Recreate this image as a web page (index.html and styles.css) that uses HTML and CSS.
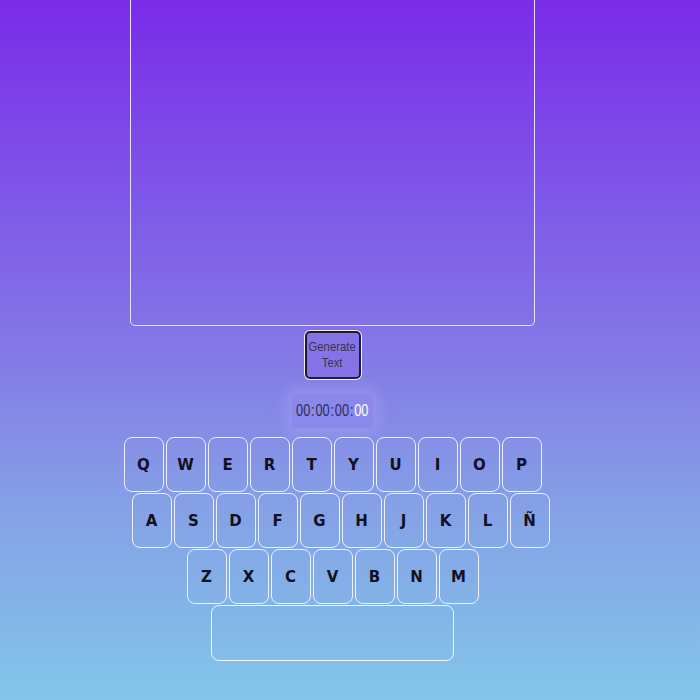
FILE: index.html
```html
<!DOCTYPE html>
<html>
<head>
<meta charset="utf-8">
<link rel="stylesheet" href="styles.css">
</head>
<body>
<main class="app">
  <div class="editor"></div>
  <button class="gen"><span class="narrow">Generate<br>Text</span></button>
  <div class="timer"><span class="narrow time"><span>00</span><span class="sep">:</span><span>00</span><span class="sep">:</span><span>00</span><span class="sep">:</span><span class="ms">00</span></span></div>
  <div class="keyboard">
    <div class="row">
      <div class="key">Q</div><div class="key">W</div><div class="key">E</div><div class="key">R</div><div class="key">T</div><div class="key">Y</div><div class="key">U</div><div class="key">I</div><div class="key">O</div><div class="key">P</div>
    </div>
    <div class="row row2">
      <div class="key">A</div><div class="key">S</div><div class="key">D</div><div class="key">F</div><div class="key">G</div><div class="key">H</div><div class="key">J</div><div class="key">K</div><div class="key">L</div><div class="key">Ñ</div>
    </div>
    <div class="row">
      <div class="key">Z</div><div class="key">X</div><div class="key">C</div><div class="key">V</div><div class="key">B</div><div class="key">N</div><div class="key">M</div>
    </div>
    <div class="row">
      <div class="space"></div>
    </div>
  </div>
</main>
</body>
</html>
```
FILE: styles.css
```css
html, body {
  margin: 0;
  height: 700px;
  overflow: hidden;
}
body {
  background: linear-gradient(to bottom, #7a2be8 0%, #7f5ae8 30%, #8478e6 50%, #85a0e6 72%, #82c6ea 100%);
  font-family: "Liberation Sans", Arial, sans-serif;
}
.app {
  width: 665px;
  display: flex;
  flex-direction: column;
  align-items: center;
}
.editor {
  width: 405px;
  height: 331px;
  margin-top: -5px;
  border: 1px solid #e8e0ff;
  border-radius: 5px;
  box-sizing: border-box;
}
.gen {
  margin-top: 5px;
  width: 56px;
  height: 48px;
  padding: 0;
  background: #8574e6;
  border: 2px solid #1e1a33;
  border-radius: 5px;
  box-shadow: 0 0 0 1px #f2eeff;
  color: #3a3550;
  font-family: "Liberation Sans", Arial, sans-serif;
  font-size: 13px;
  line-height: 16px;
  display: flex;
  align-items: center;
  justify-content: center;
  overflow: visible;
}
.narrow {
  display: inline-block;
  white-space: nowrap;
  transform: scaleX(0.87);
}
.timer {
  margin-top: 15px;
  width: 81px;
  height: 34px;
  box-sizing: border-box;
  background: #8a88ea;
  border-radius: 4px;
  box-shadow: 0 0 14px 6px rgba(170, 165, 245, 0.45);
  display: flex;
  align-items: center;
  justify-content: center;
  color: #2f2c55;
  font-size: 16px;
}
.time {
  transform: scaleX(0.8);
}
.sep {
  margin: 0 1px;
}
.ms {
  color: #ffffff;
}
.keyboard {
  margin-top: 9px;
  display: flex;
  flex-direction: column;
  align-items: center;
}
.row {
  display: flex;
}
.row2 {
  padding-left: 16px;
}
.key {
  width: 40px;
  height: 55px;
  margin: 0 1px 1px;
  box-sizing: border-box;
  border: 1px solid #eef0ff;
  border-radius: 8px;
  display: flex;
  align-items: center;
  justify-content: center;
  font-family: "DejaVu Sans", sans-serif;
  font-weight: bold;
  font-size: 15px;
  color: #111122;
}
.space {
  width: 243px;
  height: 56px;
  box-sizing: border-box;
  border: 1px solid #eef4ff;
  border-radius: 8px;
  margin-left: -1px;
}
```
